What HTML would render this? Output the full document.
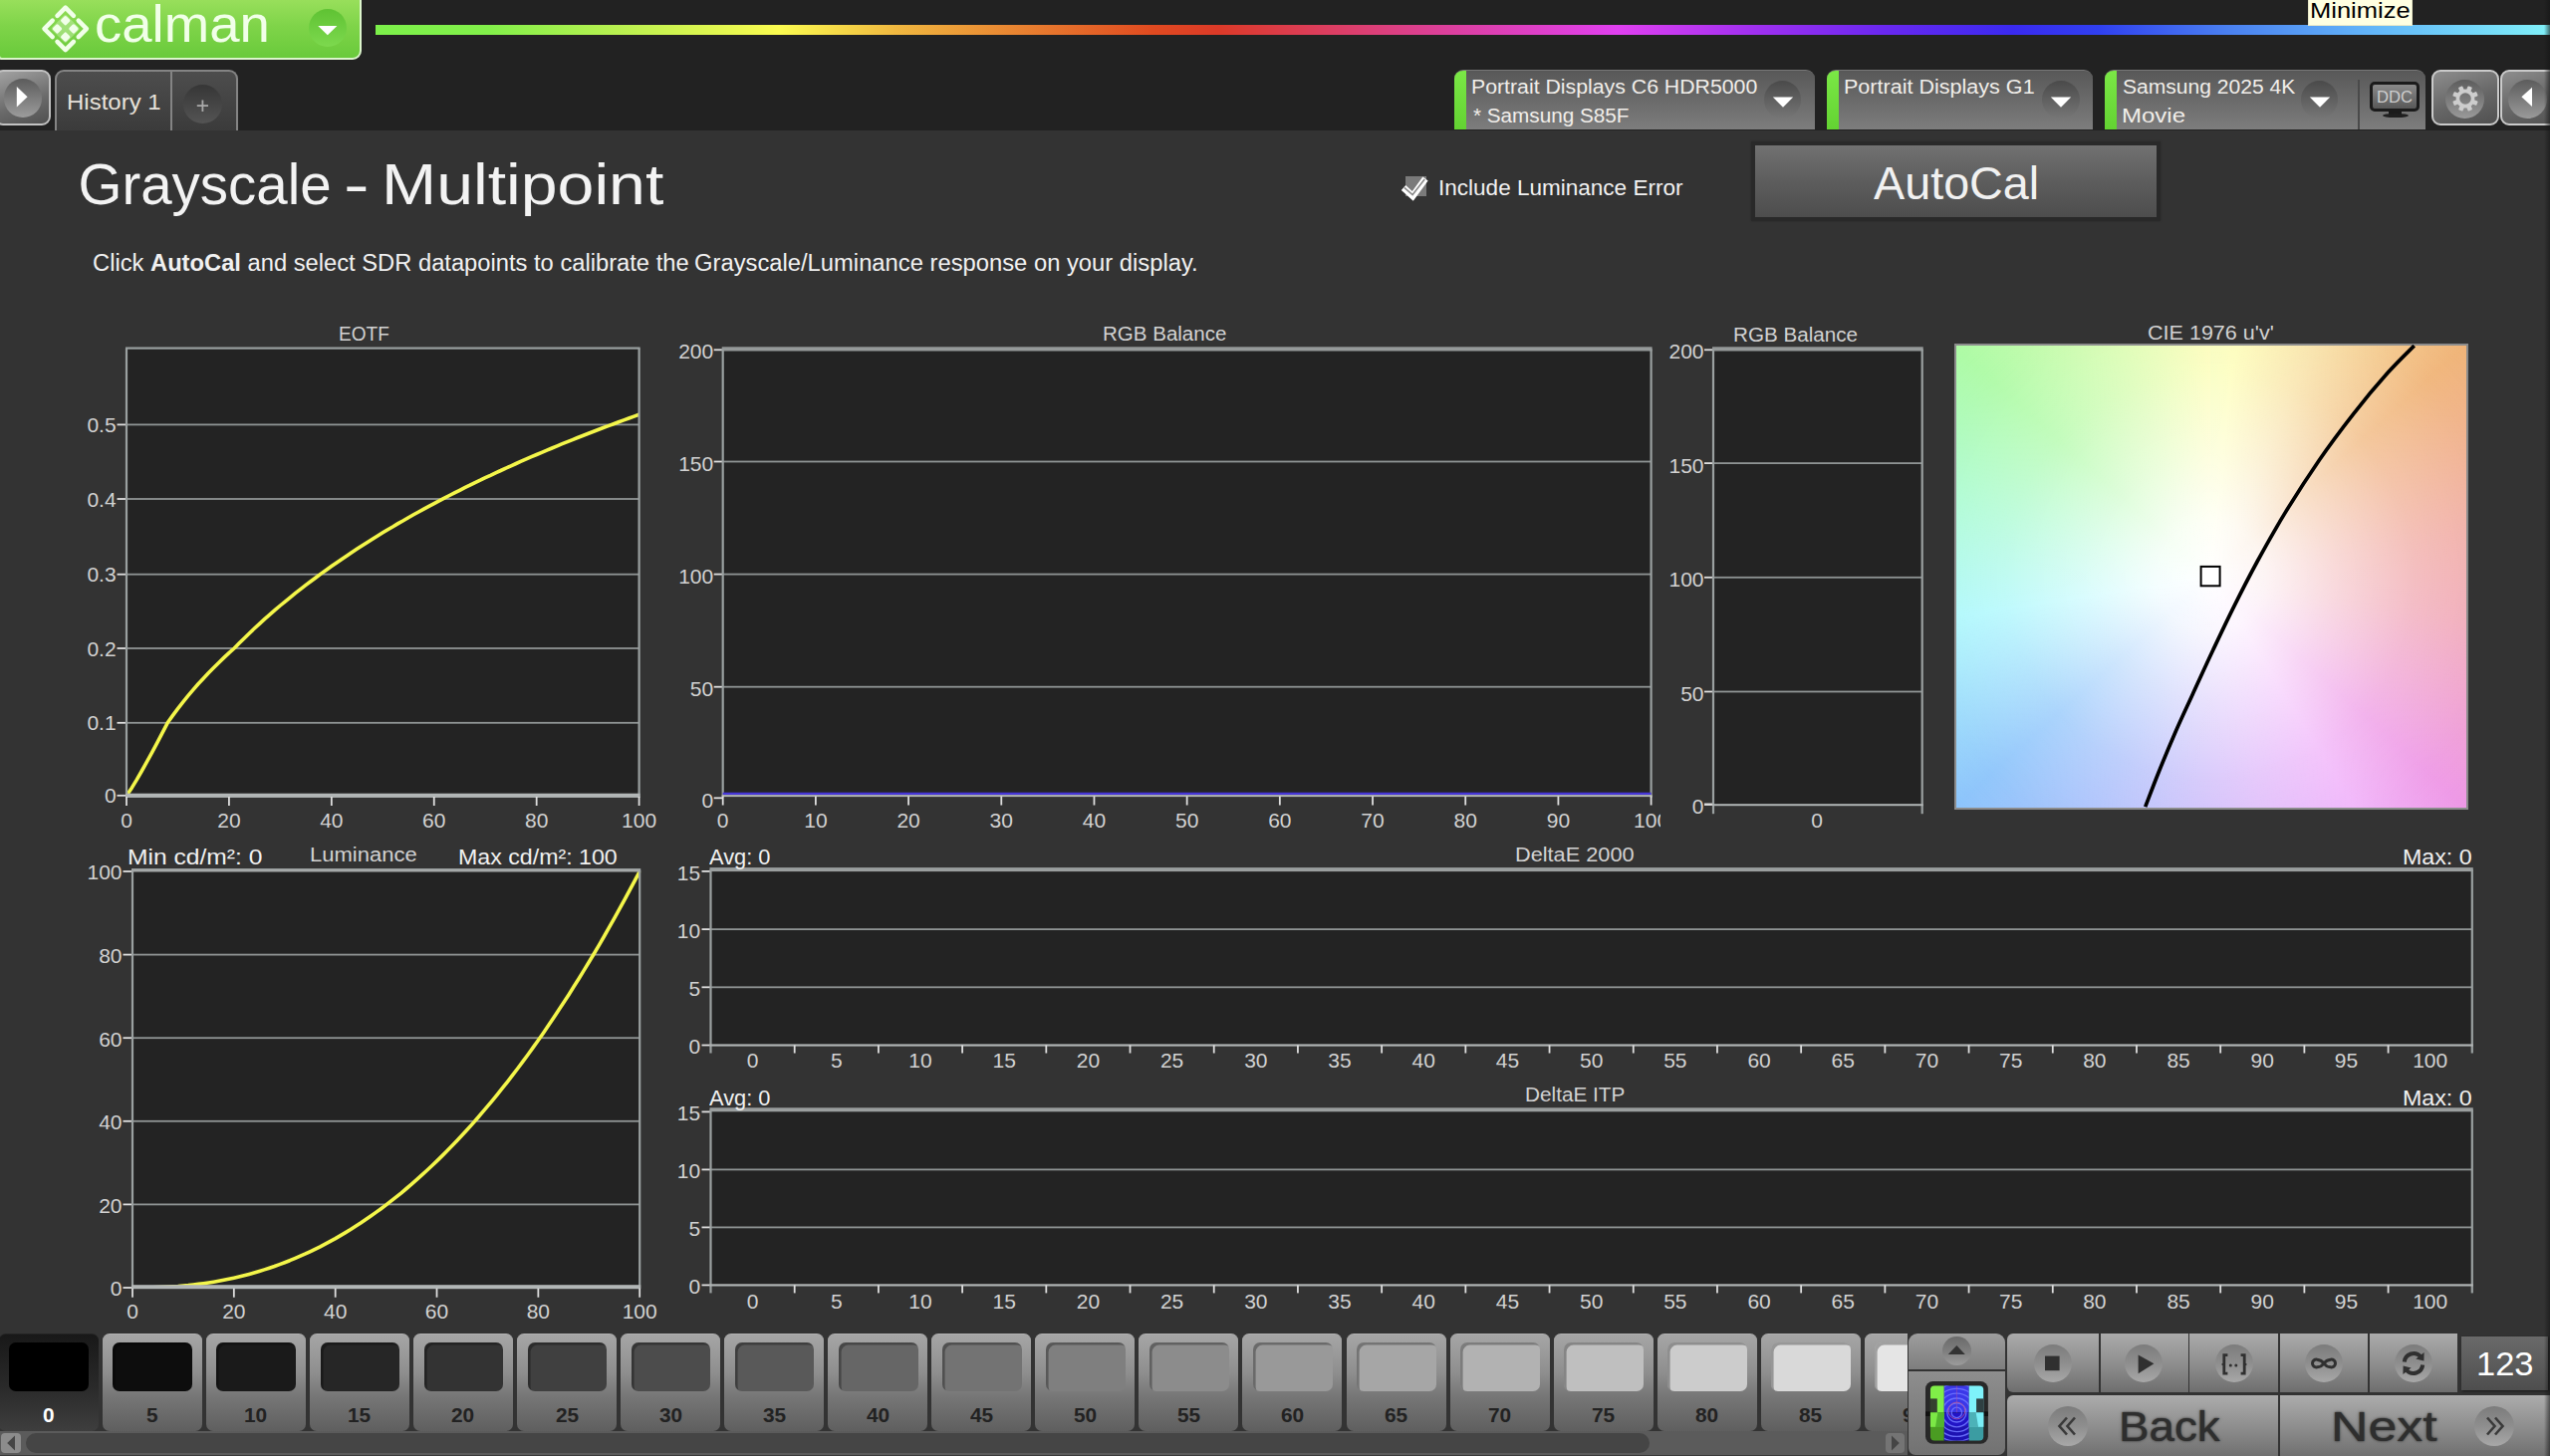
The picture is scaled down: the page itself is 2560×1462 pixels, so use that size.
<!DOCTYPE html><html><head><meta charset="utf-8"><title>Calman - Grayscale Multipoint</title><style>
html,body{margin:0;padding:0;background:#333;}
body{width:2560px;height:1462px;position:relative;overflow:hidden;font-family:"Liberation Sans",sans-serif;}
.t{position:absolute;white-space:pre;line-height:1;transform-origin:0 0;}
.a{position:absolute;box-sizing:border-box;}
.circ{position:absolute;border-radius:50%;}
.dd{position:absolute;top:70px;height:60px;box-sizing:border-box;border-radius:9px 9px 0 0;background:linear-gradient(#585858,#7d7d7d);border-top:1px solid #777;overflow:hidden;}
.dd i{position:absolute;left:0;top:-1px;bottom:0;width:12px;background:linear-gradient(#7be846,#63d332);}
.ddc{background:linear-gradient(#4a4a4a,#767676);}
.cell{position:absolute;top:0;width:100px;height:98px;border-radius:7px;background:linear-gradient(#a6a6a6,#8e8e8e 40%,#777 63%,#5f5f5f);box-sizing:border-box;border-top:1px solid #b0b0b0;}
.cell.sel{background:linear-gradient(#181818,#2a2a2a 55%,#3e3e3e);border-top:1px solid #222;}
.cell u{position:absolute;left:10.5px;top:8.8px;width:79.8px;height:48.2px;border-radius:7px;box-shadow:inset 2.6px 2.6px 0.6px rgba(0,0,0,.3);}
.tb{position:absolute;top:1338.8px;height:59.6px;background:linear-gradient(#ababab,#8c8c8c 55%,#6e6e6e);}
.ic{position:absolute;border-radius:50%;background:linear-gradient(#7c7c7c,#8e8e8e 50%,#a8a8a8);}
</style></head><body><svg class="a" style="left:0;top:0" width="2560" height="1462" viewBox="0 0 2560 1462"><rect x="127.0" y="349.6" width="514.6" height="448.4" fill="#232323"/><rect x="117.50" y="797.90" width="9.50" height="1.80" fill="#dedede"/><rect x="127.00" y="724.90" width="514.60" height="1.80" fill="#8f9494"/><rect x="117.50" y="724.90" width="9.50" height="1.80" fill="#dedede"/><rect x="127.00" y="650.10" width="514.60" height="1.80" fill="#8f9494"/><rect x="117.50" y="650.10" width="9.50" height="1.80" fill="#dedede"/><rect x="127.00" y="575.80" width="514.60" height="1.80" fill="#8f9494"/><rect x="117.50" y="575.80" width="9.50" height="1.80" fill="#dedede"/><rect x="127.00" y="500.10" width="514.60" height="1.80" fill="#8f9494"/><rect x="117.50" y="500.10" width="9.50" height="1.80" fill="#dedede"/><rect x="127.00" y="425.50" width="514.60" height="1.80" fill="#8f9494"/><rect x="117.50" y="425.50" width="9.50" height="1.80" fill="#dedede"/><clipPath id="ce"><rect x="127.0" y="345.6" width="515.6" height="452.4"/></clipPath><polyline clip-path="url(#ce)" points="127.0,798.8 132.1,791.4 137.3,782.9 142.4,774.0 147.6,764.7 152.7,755.3 157.9,745.6 163.0,735.8 168.2,725.8 173.3,718.6 178.5,711.7 183.6,705.1 188.8,698.7 193.9,692.7 199.0,686.8 204.2,681.2 209.3,675.7 214.5,670.5 219.6,665.4 224.8,660.4 229.9,655.6 235.1,651.0 240.2,645.8 245.4,640.7 250.5,635.7 255.7,630.8 260.8,626.1 265.9,621.4 271.1,616.9 276.2,612.4 281.4,608.0 286.5,603.8 291.7,599.6 296.8,595.4 302.0,591.4 307.1,587.4 312.3,583.5 317.4,579.7 322.5,575.9 327.7,572.2 332.8,568.5 338.0,564.9 343.1,561.4 348.3,557.9 353.4,554.4 358.6,551.0 363.7,547.7 368.9,544.4 374.0,541.2 379.2,538.0 384.3,534.8 389.4,531.7 394.6,528.7 399.7,525.6 404.9,522.7 410.0,519.7 415.2,516.8 420.3,514.0 425.5,511.1 430.6,508.4 435.8,505.6 440.9,502.9 446.1,500.2 451.2,497.5 456.3,494.9 461.5,492.3 466.6,489.7 471.8,487.2 476.9,484.6 482.1,482.2 487.2,479.7 492.4,477.3 497.5,474.8 502.7,472.5 507.8,470.1 513.0,467.8 518.1,465.5 523.2,463.2 528.4,460.9 533.5,458.7 538.7,456.5 543.8,454.3 549.0,452.1 554.1,450.0 559.3,447.8 564.4,445.7 569.6,443.6 574.7,441.6 579.8,439.5 585.0,437.5 590.1,435.5 595.3,433.5 600.4,431.5 605.6,429.5 610.7,427.6 615.9,425.7 621.0,423.8 626.2,421.9 631.3,420.0 636.5,418.1 641.6,416.3" fill="none" stroke="#f4f64a" stroke-width="3.6" stroke-linejoin="round"/><rect x="125.90" y="349.60" width="2.20" height="450.40" fill="#9aa0a0"/><rect x="640.50" y="349.60" width="2.20" height="450.40" fill="#9aa0a0"/><rect x="126.00" y="348.50" width="516.60" height="2.20" fill="#9aa0a0"/><rect x="126.00" y="796.70" width="516.60" height="4.20" fill="#b2b6b6"/><rect x="126.10" y="800.00" width="1.80" height="9.00" fill="#dedede"/><rect x="229.02" y="800.00" width="1.80" height="9.00" fill="#dedede"/><rect x="331.94" y="800.00" width="1.80" height="9.00" fill="#dedede"/><rect x="434.86" y="800.00" width="1.80" height="9.00" fill="#dedede"/><rect x="537.78" y="800.00" width="1.80" height="9.00" fill="#dedede"/><rect x="640.70" y="800.00" width="1.80" height="9.00" fill="#dedede"/><rect x="725.7" y="350.4" width="931.9" height="448.1" fill="#232323"/><rect x="716.70" y="350.40" width="9.00" height="1.80" fill="#dedede"/><rect x="725.70" y="462.60" width="931.90" height="1.80" fill="#8f9494"/><rect x="716.70" y="462.60" width="9.00" height="1.80" fill="#dedede"/><rect x="725.70" y="575.70" width="931.90" height="1.80" fill="#8f9494"/><rect x="716.70" y="575.70" width="9.00" height="1.80" fill="#dedede"/><rect x="725.70" y="688.80" width="931.90" height="1.80" fill="#8f9494"/><rect x="716.70" y="688.80" width="9.00" height="1.80" fill="#dedede"/><rect x="716.70" y="800.40" width="9.00" height="1.80" fill="#dedede"/><rect x="724.70" y="348.30" width="933.90" height="4.20" fill="#959999"/><rect x="724.60" y="350.40" width="2.20" height="450.10" fill="#9aa0a0"/><rect x="1656.50" y="350.40" width="2.20" height="450.10" fill="#9aa0a0"/><rect x="725.70" y="795.70" width="931.90" height="2.40" fill="#4636d6"/><rect x="724.70" y="798.10" width="933.90" height="2.00" fill="#b0b4b4"/><rect x="724.80" y="799.50" width="1.80" height="9.00" fill="#dedede"/><rect x="817.99" y="799.50" width="1.80" height="9.00" fill="#dedede"/><rect x="911.18" y="799.50" width="1.80" height="9.00" fill="#dedede"/><rect x="1004.37" y="799.50" width="1.80" height="9.00" fill="#dedede"/><rect x="1097.56" y="799.50" width="1.80" height="9.00" fill="#dedede"/><rect x="1190.75" y="799.50" width="1.80" height="9.00" fill="#dedede"/><rect x="1283.94" y="799.50" width="1.80" height="9.00" fill="#dedede"/><rect x="1377.13" y="799.50" width="1.80" height="9.00" fill="#dedede"/><rect x="1470.32" y="799.50" width="1.80" height="9.00" fill="#dedede"/><rect x="1563.51" y="799.50" width="1.80" height="9.00" fill="#dedede"/><rect x="1656.70" y="799.50" width="1.80" height="9.00" fill="#dedede"/><rect x="1720.0" y="350.4" width="209.7" height="457.8" fill="#232323"/><rect x="1711.00" y="350.40" width="9.00" height="1.80" fill="#dedede"/><rect x="1720.00" y="464.20" width="209.70" height="1.80" fill="#8f9494"/><rect x="1711.00" y="464.20" width="9.00" height="1.80" fill="#dedede"/><rect x="1720.00" y="578.90" width="209.70" height="1.80" fill="#8f9494"/><rect x="1711.00" y="578.90" width="9.00" height="1.80" fill="#dedede"/><rect x="1720.00" y="693.60" width="209.70" height="1.80" fill="#8f9494"/><rect x="1711.00" y="693.60" width="9.00" height="1.80" fill="#dedede"/><rect x="1711.00" y="806.50" width="9.00" height="2.40" fill="#dedede"/><rect x="1719.00" y="348.30" width="211.70" height="4.20" fill="#959999"/><rect x="1718.90" y="350.40" width="2.20" height="466.80" fill="#9aa0a0"/><rect x="1928.60" y="350.40" width="2.20" height="466.80" fill="#9aa0a0"/><rect x="1719.00" y="807.20" width="211.70" height="2.00" fill="#b0b4b4"/><rect x="133.0" y="873.8" width="509.2" height="417.9" fill="#232323"/><rect x="123.50" y="1292.10" width="9.50" height="1.80" fill="#dedede"/><rect x="133.00" y="1208.50" width="509.20" height="1.80" fill="#8f9494"/><rect x="123.50" y="1208.50" width="9.50" height="1.80" fill="#dedede"/><rect x="133.00" y="1124.90" width="509.20" height="1.80" fill="#8f9494"/><rect x="123.50" y="1124.90" width="9.50" height="1.80" fill="#dedede"/><rect x="133.00" y="1041.30" width="509.20" height="1.80" fill="#8f9494"/><rect x="123.50" y="1041.30" width="9.50" height="1.80" fill="#dedede"/><rect x="133.00" y="957.70" width="509.20" height="1.80" fill="#8f9494"/><rect x="123.50" y="957.70" width="9.50" height="1.80" fill="#dedede"/><rect x="123.50" y="874.10" width="9.50" height="1.80" fill="#dedede"/><clipPath id="cl"><rect x="133.0" y="869.8" width="510.2" height="421.9"/></clipPath><polyline clip-path="url(#cl)" points="133.0,1293.0 138.1,1293.0 143.2,1293.0 148.3,1292.9 153.4,1292.8 158.5,1292.6 163.6,1292.4 168.6,1292.1 173.7,1291.8 178.8,1291.5 183.9,1291.0 189.0,1290.6 194.1,1290.0 199.2,1289.4 204.3,1288.7 209.4,1288.0 214.5,1287.2 219.6,1286.3 224.7,1285.3 229.7,1284.3 234.8,1283.2 239.9,1282.0 245.0,1280.7 250.1,1279.4 255.2,1278.0 260.3,1276.5 265.4,1274.9 270.5,1273.2 275.6,1271.5 280.7,1269.6 285.8,1267.7 290.9,1265.7 295.9,1263.6 301.0,1261.4 306.1,1259.2 311.2,1256.8 316.3,1254.3 321.4,1251.8 326.5,1249.1 331.6,1246.4 336.7,1243.6 341.8,1240.6 346.9,1237.6 352.0,1234.5 357.0,1231.3 362.1,1228.0 367.2,1224.5 372.3,1221.0 377.4,1217.4 382.5,1213.7 387.6,1209.9 392.7,1205.9 397.8,1201.9 402.9,1197.8 408.0,1193.5 413.1,1189.2 418.2,1184.7 423.2,1180.2 428.3,1175.5 433.4,1170.7 438.5,1165.9 443.6,1160.9 448.7,1155.8 453.8,1150.6 458.9,1145.2 464.0,1139.8 469.1,1134.3 474.2,1128.6 479.3,1122.8 484.3,1116.9 489.4,1110.9 494.5,1104.8 499.6,1098.6 504.7,1092.2 509.8,1085.8 514.9,1079.2 520.0,1072.5 525.1,1065.6 530.2,1058.7 535.3,1051.6 540.4,1044.5 545.5,1037.2 550.5,1029.8 555.6,1022.2 560.7,1014.6 565.8,1006.8 570.9,998.9 576.0,990.8 581.1,982.7 586.2,974.4 591.3,966.0 596.4,957.5 601.5,948.8 606.6,940.0 611.6,931.1 616.7,922.1 621.8,912.9 626.9,903.6 632.0,894.2 637.1,884.7 642.2,875.0" fill="none" stroke="#f4f64a" stroke-width="3.6" stroke-linejoin="round"/><rect x="131.90" y="873.80" width="2.20" height="419.90" fill="#9aa0a0"/><rect x="641.10" y="873.80" width="2.20" height="419.90" fill="#9aa0a0"/><rect x="132.00" y="872.10" width="511.20" height="3.40" fill="#a4a8a8"/><rect x="132.00" y="1290.20" width="511.20" height="4.00" fill="#b2b6b6"/><rect x="132.10" y="1293.70" width="1.80" height="9.00" fill="#dedede"/><rect x="233.94" y="1293.70" width="1.80" height="9.00" fill="#dedede"/><rect x="335.78" y="1293.70" width="1.80" height="9.00" fill="#dedede"/><rect x="437.62" y="1293.70" width="1.80" height="9.00" fill="#dedede"/><rect x="539.46" y="1293.70" width="1.80" height="9.00" fill="#dedede"/><rect x="641.30" y="1293.70" width="1.80" height="9.00" fill="#dedede"/><rect x="713.5" y="873.1" width="1768.3" height="176.4" fill="#232323"/><rect x="704.50" y="1048.60" width="9.00" height="1.80" fill="#dedede"/><rect x="713.50" y="990.40" width="1768.30" height="1.80" fill="#8f9494"/><rect x="704.50" y="990.40" width="9.00" height="1.80" fill="#dedede"/><rect x="713.50" y="932.20" width="1768.30" height="1.80" fill="#8f9494"/><rect x="704.50" y="932.20" width="9.00" height="1.80" fill="#dedede"/><rect x="704.50" y="874.00" width="9.00" height="1.80" fill="#dedede"/><rect x="712.50" y="871.10" width="1770.30" height="4.00" fill="#9a9e9e"/><rect x="712.40" y="873.10" width="2.20" height="184.40" fill="#9aa0a0"/><rect x="2480.70" y="873.10" width="2.20" height="184.40" fill="#9aa0a0"/><rect x="712.50" y="1048.40" width="1770.30" height="2.20" fill="#b0b4b4"/><rect x="796.80" y="1049.50" width="1.80" height="8.00" fill="#dedede"/><rect x="881.01" y="1049.50" width="1.80" height="8.00" fill="#dedede"/><rect x="965.21" y="1049.50" width="1.80" height="8.00" fill="#dedede"/><rect x="1049.42" y="1049.50" width="1.80" height="8.00" fill="#dedede"/><rect x="1133.62" y="1049.50" width="1.80" height="8.00" fill="#dedede"/><rect x="1217.83" y="1049.50" width="1.80" height="8.00" fill="#dedede"/><rect x="1302.03" y="1049.50" width="1.80" height="8.00" fill="#dedede"/><rect x="1386.24" y="1049.50" width="1.80" height="8.00" fill="#dedede"/><rect x="1470.44" y="1049.50" width="1.80" height="8.00" fill="#dedede"/><rect x="1554.65" y="1049.50" width="1.80" height="8.00" fill="#dedede"/><rect x="1638.85" y="1049.50" width="1.80" height="8.00" fill="#dedede"/><rect x="1723.06" y="1049.50" width="1.80" height="8.00" fill="#dedede"/><rect x="1807.26" y="1049.50" width="1.80" height="8.00" fill="#dedede"/><rect x="1891.47" y="1049.50" width="1.80" height="8.00" fill="#dedede"/><rect x="1975.67" y="1049.50" width="1.80" height="8.00" fill="#dedede"/><rect x="2059.88" y="1049.50" width="1.80" height="8.00" fill="#dedede"/><rect x="2144.08" y="1049.50" width="1.80" height="8.00" fill="#dedede"/><rect x="2228.29" y="1049.50" width="1.80" height="8.00" fill="#dedede"/><rect x="2312.49" y="1049.50" width="1.80" height="8.00" fill="#dedede"/><rect x="2396.70" y="1049.50" width="1.80" height="8.00" fill="#dedede"/><rect x="713.5" y="1114.3" width="1768.3" height="176.1" fill="#232323"/><rect x="704.50" y="1289.50" width="9.00" height="1.80" fill="#dedede"/><rect x="713.50" y="1231.50" width="1768.30" height="1.80" fill="#8f9494"/><rect x="704.50" y="1231.50" width="9.00" height="1.80" fill="#dedede"/><rect x="713.50" y="1173.50" width="1768.30" height="1.80" fill="#8f9494"/><rect x="704.50" y="1173.50" width="9.00" height="1.80" fill="#dedede"/><rect x="704.50" y="1115.50" width="9.00" height="1.80" fill="#dedede"/><rect x="712.50" y="1112.30" width="1770.30" height="4.00" fill="#9a9e9e"/><rect x="712.40" y="1114.30" width="2.20" height="184.10" fill="#9aa0a0"/><rect x="2480.70" y="1114.30" width="2.20" height="184.10" fill="#9aa0a0"/><rect x="712.50" y="1289.30" width="1770.30" height="2.20" fill="#b0b4b4"/><rect x="796.80" y="1290.40" width="1.80" height="8.00" fill="#dedede"/><rect x="881.01" y="1290.40" width="1.80" height="8.00" fill="#dedede"/><rect x="965.21" y="1290.40" width="1.80" height="8.00" fill="#dedede"/><rect x="1049.42" y="1290.40" width="1.80" height="8.00" fill="#dedede"/><rect x="1133.62" y="1290.40" width="1.80" height="8.00" fill="#dedede"/><rect x="1217.83" y="1290.40" width="1.80" height="8.00" fill="#dedede"/><rect x="1302.03" y="1290.40" width="1.80" height="8.00" fill="#dedede"/><rect x="1386.24" y="1290.40" width="1.80" height="8.00" fill="#dedede"/><rect x="1470.44" y="1290.40" width="1.80" height="8.00" fill="#dedede"/><rect x="1554.65" y="1290.40" width="1.80" height="8.00" fill="#dedede"/><rect x="1638.85" y="1290.40" width="1.80" height="8.00" fill="#dedede"/><rect x="1723.06" y="1290.40" width="1.80" height="8.00" fill="#dedede"/><rect x="1807.26" y="1290.40" width="1.80" height="8.00" fill="#dedede"/><rect x="1891.47" y="1290.40" width="1.80" height="8.00" fill="#dedede"/><rect x="1975.67" y="1290.40" width="1.80" height="8.00" fill="#dedede"/><rect x="2059.88" y="1290.40" width="1.80" height="8.00" fill="#dedede"/><rect x="2144.08" y="1290.40" width="1.80" height="8.00" fill="#dedede"/><rect x="2228.29" y="1290.40" width="1.80" height="8.00" fill="#dedede"/><rect x="2312.49" y="1290.40" width="1.80" height="8.00" fill="#dedede"/><rect x="2396.70" y="1290.40" width="1.80" height="8.00" fill="#dedede"/></svg><div class="a" id="topbar" style="left:0;top:0;width:2560px;height:131px;background:#222"></div><div class="a" id="logo" style="left:-2px;top:-2px;width:365px;height:62px;border-radius:0 0 9px 4px;background:linear-gradient(#98df5b,#7fd449 45%,#69ca3b);border:2px solid #dcf5cc;"></div><svg class="a" style="left:0;top:0" width="120" height="60" viewBox="0 0 120 60"><g transform="translate(65.7,28.9) rotate(45)" fill="#f1ffe9" stroke="none"><rect x="-10.5" y="-10.5" width="21" height="21" rx="2" fill="#f1ffe9" opacity=".3"/><rect x="-9.55" y="-9.55" width="7.50" height="7.50" rx="1.6"/><rect x="-9.55" y="2.05" width="7.50" height="7.50" rx="1.6"/><rect x="2.05" y="-9.55" width="7.50" height="7.50" rx="1.6"/><rect x="2.05" y="2.05" width="7.50" height="7.50" rx="1.6"/></g><g transform="translate(65.7,28.9) rotate(45)" fill="none" stroke="#f1ffe9" stroke-width="4.5" stroke-linejoin="round" stroke-linecap="round"><path d="M-15.0 -3.4 L-15.0 -15.0 L-3.4 -15.0"/><path d="M15.0 -3.4 L15.0 -15.0 L3.4 -15.0"/><path d="M15.0 3.4 L15.0 15.0 L3.4 15.0"/><path d="M-15.0 3.4 L-15.0 15.0 L-3.4 15.0"/></g></svg><span class="t" style="left:94.68px;top:-1.08px;font-size:51.60px;color:#f1ffe9;transform:scaleX(1.0572);">calman</span><div class="circ" style="left:309.5px;top:9.2px;width:38px;height:38px;background:linear-gradient(#5fc233,#7dd94e)"></div><svg class="a" style="left:315px;top:22px" width="30" height="18"><path d="M4.3 4.1 L23.4 4.1 L13.85 13.3 Z" fill="#fff"/></svg><div class="a" id="rainbow" style="left:377px;top:25px;width:2183px;height:10px;background:linear-gradient(90deg,#7cf04a 0.00%,#82f04a 5.18%,#b8f050 11.09%,#fbfb50 18.60%,#f0b840 23.91%,#e88030 29.87%,#e04a20 35.78%,#dc3a28 38.75%,#dc4080 46.63%,#dc40a0 49.61%,#e040f0 57.12%,#a030f0 63.44%,#6a28f0 69.35%,#3a2af0 75.31%,#3040f0 79.25%,#4a80f0 85.16%,#60b0f8 91.11%,#80f0f8 100.00%)"></div><div class="a" id="tooltip" style="left:2317px;top:-1px;width:104.5px;height:27px;background:#ffffe1;border:1px solid #e8e8c8"></div><span class="t" style="left:2318.81px;top:0.27px;font-size:22.60px;color:#000;transform:scaleX(1.1287);">Minimize</span><div class="a" style="left:-6px;top:70px;width:57px;height:56px;border:2px solid #c2c2c2;border-radius:9px;background:linear-gradient(160deg,#a4a4a4,#6a6a6a 60%,#505050)"></div><div class="circ" style="left:3.5px;top:78.8px;width:38.8px;height:38.8px;background:linear-gradient(#5c5c5c,#9c9c9c)"></div><svg class="a" style="left:0;top:70px" width="50" height="56"><path d="M16.8 17 L27.6 27.3 L16.8 37.4 Z" fill="#fff"/></svg><div class="a" style="left:55px;top:70px;width:184px;height:60.5px;border:2px solid #848484;border-bottom:none;border-radius:9px 9px 0 0;background:linear-gradient(#4d4d4d,#3b3b3b)"></div><div class="a" style="left:171px;top:71px;width:2px;height:59.5px;background:#848484"></div><span class="t" style="left:66.53px;top:92.38px;font-size:22.00px;color:#e6e1da;transform:scaleX(1.0903);">History 1</span><div class="circ" style="left:183.9px;top:84.9px;width:39px;height:39px;background:linear-gradient(#363636,#545454)"></div><svg class="a" style="left:190px;top:95px" width="28" height="24"><path d="M7.8 11.2 H19 M13.4 5.4 V17" stroke="#aaa" stroke-width="1.8" fill="none"/></svg><div class="dd" style="left:1460.0px;width:362.0px"><i></i></div><div class="circ ddc" style="left:1770.8px;top:81.2px;width:37.6px;height:37.6px"></div><svg class="a" style="left:1774.6px;top:92px" width="30" height="20"><path d="M4.8 5.6 L25.2 5.6 L15 15.8 Z" fill="#fff"/></svg><span class="t" style="left:1477.16px;top:77.27px;font-size:20.00px;color:#f1eeea;transform:scaleX(1.0636);">Portrait Displays C6 HDR5000</span><span class="t" style="left:1478.57px;top:105.77px;font-size:20.00px;color:#f1eeea;transform:scaleX(1.0349);">* Samsung S85F</span><div class="dd" style="left:1834.0px;width:267.0px"><i></i></div><div class="circ ddc" style="left:2050.2px;top:81.2px;width:37.6px;height:37.6px"></div><svg class="a" style="left:2054.0px;top:92px" width="30" height="20"><path d="M4.8 5.6 L25.2 5.6 L15 15.8 Z" fill="#fff"/></svg><span class="t" style="left:1851.13px;top:77.27px;font-size:20.00px;color:#f1eeea;transform:scaleX(1.0775);">Portrait Displays G1</span><div class="dd" style="left:2113.3px;width:321.5px"><i></i><b style="position:absolute;left:253.6px;top:9px;bottom:0;width:2px;background:#4a4a4a"></b></div><div class="circ ddc" style="left:2309.7px;top:81.2px;width:37.6px;height:37.6px"></div><svg class="a" style="left:2313.5px;top:92px" width="30" height="20"><path d="M4.8 5.6 L25.2 5.6 L15 15.8 Z" fill="#fff"/></svg><span class="t" style="left:2131.24px;top:77.27px;font-size:20.00px;color:#f1eeea;transform:scaleX(1.0524);">Samsung 2025 4K</span><span class="t" style="left:2130.23px;top:105.77px;font-size:20.00px;color:#f1eeea;transform:scaleX(1.2003);">Movie</span><div class="a" style="left:2379.3px;top:81.6px;width:49.7px;height:30.6px;border:3px solid #1b1b1b;border-radius:5px;background:linear-gradient(#8a8a8a,#585858)"></div><div class="a" style="left:2398px;top:112px;width:13px;height:4px;background:#1b1b1b"></div><div class="a" style="left:2391.5px;top:113.8px;width:26px;height:4.6px;border-radius:50%;background:#1f1f1f"></div><span class="t" style="left:2385.64px;top:89.20px;font-size:16.30px;color:#cdcdcd;transform:scaleX(1.0193);">DDC</span><div class="a" style="left:2441px;top:70px;width:67.5px;height:56px;border:2px solid #cacaca;border-radius:9px;background:linear-gradient(160deg,#8e8e8e,#666 55%,#505050)"></div><div class="circ" style="left:2455.4px;top:79.9px;width:39px;height:39px;background:linear-gradient(#5c5c5c,#9a9a9a)"></div><svg class="a" style="left:2454.9px;top:79.4px" width="40" height="40" viewBox="-20 -20 40 40"><g fill="#cdcdcd"><rect x="-2.3" y="-12.9" width="4.6" height="5" rx="0.8" transform="rotate(22)"/><rect x="-2.3" y="-12.9" width="4.6" height="5" rx="0.8" transform="rotate(67)"/><rect x="-2.3" y="-12.9" width="4.6" height="5" rx="0.8" transform="rotate(112)"/><rect x="-2.3" y="-12.9" width="4.6" height="5" rx="0.8" transform="rotate(157)"/><rect x="-2.3" y="-12.9" width="4.6" height="5" rx="0.8" transform="rotate(202)"/><rect x="-2.3" y="-12.9" width="4.6" height="5" rx="0.8" transform="rotate(247)"/><rect x="-2.3" y="-12.9" width="4.6" height="5" rx="0.8" transform="rotate(292)"/><rect x="-2.3" y="-12.9" width="4.6" height="5" rx="0.8" transform="rotate(337)"/></g><circle r="7.6" fill="none" stroke="#cdcdcd" stroke-width="3.6"/></svg><div class="a" style="left:2509.5px;top:70px;width:70px;height:56px;border:2px solid #cacaca;border-radius:9px;background:linear-gradient(160deg,#8e8e8e,#666 55%,#505050)"></div><div class="circ" style="left:2518.1px;top:79.9px;width:39px;height:39px;background:linear-gradient(#5c5c5c,#9a9a9a)"></div><svg class="a" style="left:2520px;top:80px" width="30" height="36"><path d="M22 7.7 L22 27 L11.4 17.3 Z" fill="#fff"/></svg><span class="t" style="left:78.45px;top:157.97px;font-size:56.50px;color:#f3f3f3;">Grayscale</span><span class="t" style="left:345.28px;top:157.97px;font-size:56.50px;color:#f3f3f3;transform:scaleX(1.3629);">-</span><span class="t" style="left:383.37px;top:157.97px;font-size:56.50px;color:#f3f3f3;transform:scaleX(1.1716);">Multipoint</span><span class="t" style="left:92.70px;top:252.53px;font-size:23.00px;color:#f1f1f1;transform:scaleX(1.0314);">Click <b>AutoCal</b> and select SDR datapoints to calibrate the</span><span class="t" style="left:697.20px;top:252.53px;font-size:23.00px;color:#f1f1f1;transform:scaleX(1.0336);">Grayscale/Luminance response on your display.</span><div class="a" style="left:1411.2px;top:176.9px;width:20.8px;height:20.4px;background:#7a7a7a"></div><svg class="a" style="left:1400px;top:168px" width="40" height="36"><path d="M9 20.5 L18.3 29 L31 11.5" fill="none" stroke="#fff" stroke-width="6.5" stroke-linejoin="miter"/><path d="M9.8 20.3 L18.1 27.6 L30.2 11.9" fill="none" stroke="#8a8a8a" stroke-width="1.6"/></svg><span class="t" style="left:1444.42px;top:177.52px;font-size:21.60px;color:#f1f1f1;transform:scaleX(1.0435);">Include Luminance Error</span><div class="a" id="autocal" style="left:1757.8px;top:142.4px;width:411.6px;height:79.8px;border:4px solid #292929;background:linear-gradient(#717171,#5d5d5d 50%,#4d4d4d);box-shadow:0 0 1.5px #292929"></div><span class="t" style="left:1881.31px;top:161.44px;font-size:46.50px;color:#f1f1f1;transform:scaleX(1.0048);">AutoCal</span><span class="t" style="left:104.92px;top:788.42px;font-size:21.00px;color:#d2d2d2;">0</span><span class="t" style="left:87.41px;top:715.42px;font-size:21.00px;color:#d2d2d2;">0.1</span><span class="t" style="left:87.41px;top:640.62px;font-size:21.00px;color:#d2d2d2;">0.2</span><span class="t" style="left:87.41px;top:566.32px;font-size:21.00px;color:#d2d2d2;">0.3</span><span class="t" style="left:87.41px;top:490.62px;font-size:21.00px;color:#d2d2d2;">0.4</span><span class="t" style="left:87.41px;top:416.02px;font-size:21.00px;color:#d2d2d2;">0.5</span><span class="t" style="left:121.16px;top:812.52px;font-size:21.00px;color:#d2d2d2;">0</span><span class="t" style="left:218.24px;top:812.52px;font-size:21.00px;color:#d2d2d2;">20</span><span class="t" style="left:321.16px;top:812.52px;font-size:21.00px;color:#d2d2d2;">40</span><span class="t" style="left:424.08px;top:812.52px;font-size:21.00px;color:#d2d2d2;">60</span><span class="t" style="left:527.00px;top:812.52px;font-size:21.00px;color:#d2d2d2;">80</span><span class="t" style="left:624.08px;top:812.52px;font-size:21.00px;color:#d2d2d2;">100</span><span class="t" style="left:339.94px;top:325.37px;font-size:20.00px;color:#d2d2d2;transform:scaleX(0.9531);">EOTF</span><span class="t" style="left:681.16px;top:342.02px;font-size:21.00px;color:#d2d2d2;">200</span><span class="t" style="left:681.16px;top:455.12px;font-size:21.00px;color:#d2d2d2;">150</span><span class="t" style="left:681.16px;top:568.22px;font-size:21.00px;color:#d2d2d2;">100</span><span class="t" style="left:692.84px;top:681.32px;font-size:21.00px;color:#d2d2d2;">50</span><span class="t" style="left:704.52px;top:792.92px;font-size:21.00px;color:#d2d2d2;">0</span><span class="t" style="left:719.86px;top:812.72px;font-size:21.00px;color:#d2d2d2;">0</span><span class="t" style="left:807.21px;top:812.72px;font-size:21.00px;color:#d2d2d2;">10</span><span class="t" style="left:900.40px;top:812.72px;font-size:21.00px;color:#d2d2d2;">20</span><span class="t" style="left:993.59px;top:812.72px;font-size:21.00px;color:#d2d2d2;">30</span><span class="t" style="left:1086.78px;top:812.72px;font-size:21.00px;color:#d2d2d2;">40</span><span class="t" style="left:1179.97px;top:812.72px;font-size:21.00px;color:#d2d2d2;">50</span><span class="t" style="left:1273.16px;top:812.72px;font-size:21.00px;color:#d2d2d2;">60</span><span class="t" style="left:1366.35px;top:812.72px;font-size:21.00px;color:#d2d2d2;">70</span><span class="t" style="left:1459.54px;top:812.72px;font-size:21.00px;color:#d2d2d2;">80</span><span class="t" style="left:1552.73px;top:812.72px;font-size:21.00px;color:#d2d2d2;">90</span><div class="a" style="left:1630px;top:805px;width:36.5px;height:34px;overflow:hidden"><span class="t" style="left:10.08px;top:7.72px;font-size:21.00px;color:#d2d2d2;">100</span></div><span class="t" style="left:1106.82px;top:325.47px;font-size:20.00px;color:#d2d2d2;transform:scaleX(1.0266);">RGB Balance</span><span class="t" style="left:1675.46px;top:342.02px;font-size:21.00px;color:#d2d2d2;">200</span><span class="t" style="left:1675.46px;top:456.72px;font-size:21.00px;color:#d2d2d2;">150</span><span class="t" style="left:1675.46px;top:571.42px;font-size:21.00px;color:#d2d2d2;">100</span><span class="t" style="left:1687.14px;top:686.12px;font-size:21.00px;color:#d2d2d2;">50</span><span class="t" style="left:1698.82px;top:799.32px;font-size:21.00px;color:#d2d2d2;">0</span><span class="t" style="left:1818.16px;top:812.62px;font-size:21.00px;color:#d2d2d2;">0</span><span class="t" style="left:1739.51px;top:325.97px;font-size:20.00px;color:#d2d2d2;transform:scaleX(1.0317);">RGB Balance</span><div class="a" id="cie" style="left:1961.7px;top:345.1px;width:516.6px;height:467.5px;border:2px solid #8c8c8c;background:radial-gradient(circle at 49.8% 50%,#fff 0,rgba(255,255,255,.88) 55px,rgba(255,255,255,.58) 125px,rgba(255,255,255,.27) 205px,rgba(255,255,255,.06) 295px,rgba(255,255,255,0) 345px),conic-gradient(from 0deg at 49.8% 50%,#f6fdb2 0deg,#fdfdb0 6deg,#f8e0a0 24deg,#f0b478 47.8deg,#f0a8a0 80deg,#f0a4b4 100deg,#ee98e6 132deg,#f0b0fa 148deg,#dcb6fa 168deg,#c8b8fa 183deg,#a8bcfb 205deg,#8cc4fb 228deg,#a0e8fc 250deg,#a8f8fc 261deg,#a8fbd0 287deg,#adfba5 312deg,#d6fcaa 338deg,#fdfdb0 360deg)"></div><span class="t" style="left:2156.31px;top:324.07px;font-size:20.00px;color:#d2d2d2;transform:scaleX(1.0771);">CIE 1976 u'v'</span><span class="t" style="left:110.82px;top:1283.42px;font-size:21.00px;color:#d2d2d2;">0</span><span class="t" style="left:99.14px;top:1199.82px;font-size:21.00px;color:#d2d2d2;">20</span><span class="t" style="left:99.14px;top:1116.22px;font-size:21.00px;color:#d2d2d2;">40</span><span class="t" style="left:99.14px;top:1032.62px;font-size:21.00px;color:#d2d2d2;">60</span><span class="t" style="left:99.14px;top:949.02px;font-size:21.00px;color:#d2d2d2;">80</span><span class="t" style="left:87.46px;top:865.42px;font-size:21.00px;color:#d2d2d2;">100</span><span class="t" style="left:127.16px;top:1306.12px;font-size:21.00px;color:#d2d2d2;">0</span><span class="t" style="left:223.16px;top:1306.12px;font-size:21.00px;color:#d2d2d2;">20</span><span class="t" style="left:325.00px;top:1306.12px;font-size:21.00px;color:#d2d2d2;">40</span><span class="t" style="left:426.84px;top:1306.12px;font-size:21.00px;color:#d2d2d2;">60</span><span class="t" style="left:528.68px;top:1306.12px;font-size:21.00px;color:#d2d2d2;">80</span><span class="t" style="left:624.68px;top:1306.12px;font-size:21.00px;color:#d2d2d2;">100</span><span class="t" style="left:311.19px;top:848.07px;font-size:20.00px;color:#d2d2d2;transform:scaleX(1.1016);">Luminance</span><span class="t" style="left:127.98px;top:851.48px;font-size:21.40px;color:#f1f1f1;transform:scaleX(1.1509);">Min cd/m²: 0</span><span class="t" style="left:460.10px;top:851.48px;font-size:21.40px;color:#f1f1f1;transform:scaleX(1.0837);">Max cd/m²: 100</span><span class="t" style="left:691.52px;top:1040.22px;font-size:21.00px;color:#d2d2d2;">0</span><span class="t" style="left:691.52px;top:982.02px;font-size:21.00px;color:#d2d2d2;">5</span><span class="t" style="left:679.84px;top:923.82px;font-size:21.00px;color:#d2d2d2;">10</span><span class="t" style="left:679.84px;top:865.62px;font-size:21.00px;color:#d2d2d2;">15</span><span class="t" style="left:749.76px;top:1054.32px;font-size:21.00px;color:#d2d2d2;">0</span><span class="t" style="left:833.97px;top:1054.32px;font-size:21.00px;color:#d2d2d2;">5</span><span class="t" style="left:912.33px;top:1054.32px;font-size:21.00px;color:#d2d2d2;">10</span><span class="t" style="left:996.54px;top:1054.32px;font-size:21.00px;color:#d2d2d2;">15</span><span class="t" style="left:1080.74px;top:1054.32px;font-size:21.00px;color:#d2d2d2;">20</span><span class="t" style="left:1164.95px;top:1054.32px;font-size:21.00px;color:#d2d2d2;">25</span><span class="t" style="left:1249.15px;top:1054.32px;font-size:21.00px;color:#d2d2d2;">30</span><span class="t" style="left:1333.36px;top:1054.32px;font-size:21.00px;color:#d2d2d2;">35</span><span class="t" style="left:1417.56px;top:1054.32px;font-size:21.00px;color:#d2d2d2;">40</span><span class="t" style="left:1501.77px;top:1054.32px;font-size:21.00px;color:#d2d2d2;">45</span><span class="t" style="left:1585.97px;top:1054.32px;font-size:21.00px;color:#d2d2d2;">50</span><span class="t" style="left:1670.18px;top:1054.32px;font-size:21.00px;color:#d2d2d2;">55</span><span class="t" style="left:1754.38px;top:1054.32px;font-size:21.00px;color:#d2d2d2;">60</span><span class="t" style="left:1838.59px;top:1054.32px;font-size:21.00px;color:#d2d2d2;">65</span><span class="t" style="left:1922.79px;top:1054.32px;font-size:21.00px;color:#d2d2d2;">70</span><span class="t" style="left:2006.99px;top:1054.32px;font-size:21.00px;color:#d2d2d2;">75</span><span class="t" style="left:2091.20px;top:1054.32px;font-size:21.00px;color:#d2d2d2;">80</span><span class="t" style="left:2175.40px;top:1054.32px;font-size:21.00px;color:#d2d2d2;">85</span><span class="t" style="left:2259.61px;top:1054.32px;font-size:21.00px;color:#d2d2d2;">90</span><span class="t" style="left:2343.81px;top:1054.32px;font-size:21.00px;color:#d2d2d2;">95</span><span class="t" style="left:2422.18px;top:1054.32px;font-size:21.00px;color:#d2d2d2;">100</span><span class="t" style="left:1521.42px;top:847.67px;font-size:20.00px;color:#d2d2d2;transform:scaleX(1.0859);">DeltaE 2000</span><span class="t" style="left:712.46px;top:851.28px;font-size:21.40px;color:#f1f1f1;transform:scaleX(1.0201);">Avg: 0</span><span class="t" style="left:2411.99px;top:851.28px;font-size:21.40px;color:#f1f1f1;transform:scaleX(1.0855);">Max: 0</span><span class="t" style="left:691.52px;top:1281.12px;font-size:21.00px;color:#d2d2d2;">0</span><span class="t" style="left:691.52px;top:1223.12px;font-size:21.00px;color:#d2d2d2;">5</span><span class="t" style="left:679.84px;top:1165.12px;font-size:21.00px;color:#d2d2d2;">10</span><span class="t" style="left:679.84px;top:1107.12px;font-size:21.00px;color:#d2d2d2;">15</span><span class="t" style="left:749.76px;top:1295.62px;font-size:21.00px;color:#d2d2d2;">0</span><span class="t" style="left:833.97px;top:1295.62px;font-size:21.00px;color:#d2d2d2;">5</span><span class="t" style="left:912.33px;top:1295.62px;font-size:21.00px;color:#d2d2d2;">10</span><span class="t" style="left:996.54px;top:1295.62px;font-size:21.00px;color:#d2d2d2;">15</span><span class="t" style="left:1080.74px;top:1295.62px;font-size:21.00px;color:#d2d2d2;">20</span><span class="t" style="left:1164.95px;top:1295.62px;font-size:21.00px;color:#d2d2d2;">25</span><span class="t" style="left:1249.15px;top:1295.62px;font-size:21.00px;color:#d2d2d2;">30</span><span class="t" style="left:1333.36px;top:1295.62px;font-size:21.00px;color:#d2d2d2;">35</span><span class="t" style="left:1417.56px;top:1295.62px;font-size:21.00px;color:#d2d2d2;">40</span><span class="t" style="left:1501.77px;top:1295.62px;font-size:21.00px;color:#d2d2d2;">45</span><span class="t" style="left:1585.97px;top:1295.62px;font-size:21.00px;color:#d2d2d2;">50</span><span class="t" style="left:1670.18px;top:1295.62px;font-size:21.00px;color:#d2d2d2;">55</span><span class="t" style="left:1754.38px;top:1295.62px;font-size:21.00px;color:#d2d2d2;">60</span><span class="t" style="left:1838.59px;top:1295.62px;font-size:21.00px;color:#d2d2d2;">65</span><span class="t" style="left:1922.79px;top:1295.62px;font-size:21.00px;color:#d2d2d2;">70</span><span class="t" style="left:2006.99px;top:1295.62px;font-size:21.00px;color:#d2d2d2;">75</span><span class="t" style="left:2091.20px;top:1295.62px;font-size:21.00px;color:#d2d2d2;">80</span><span class="t" style="left:2175.40px;top:1295.62px;font-size:21.00px;color:#d2d2d2;">85</span><span class="t" style="left:2259.61px;top:1295.62px;font-size:21.00px;color:#d2d2d2;">90</span><span class="t" style="left:2343.81px;top:1295.62px;font-size:21.00px;color:#d2d2d2;">95</span><span class="t" style="left:2422.18px;top:1295.62px;font-size:21.00px;color:#d2d2d2;">100</span><span class="t" style="left:1531.20px;top:1089.17px;font-size:20.00px;color:#d2d2d2;transform:scaleX(1.0372);">DeltaE ITP</span><span class="t" style="left:712.46px;top:1092.68px;font-size:21.40px;color:#f1f1f1;transform:scaleX(1.0201);">Avg: 0</span><span class="t" style="left:2411.99px;top:1092.68px;font-size:21.40px;color:#f1f1f1;transform:scaleX(1.0855);">Max: 0</span><svg class="a" style="left:1962.7px;top:346.1px" width="514.6" height="465.5" viewBox="1962.7 346.1 514.6 465.5"><path d="M2423.4 347.2 C2418.9 351.8 2406.8 363.2 2396.6 374.7 C2386.4 386.1 2373.6 401.3 2362.2 415.9 C2350.8 430.5 2339.3 445.7 2327.9 462.3 C2316.5 478.9 2303.8 498.6 2293.5 515.5 C2283.2 532.4 2274.6 547.9 2266.0 563.6 C2257.4 579.4 2249.4 595.1 2242.0 610.0 C2234.6 624.9 2228.3 638.3 2221.4 652.9 C2214.5 667.5 2207.1 683.9 2200.8 697.6 C2194.5 711.4 2189.3 722.2 2183.6 735.4 C2177.9 748.6 2171.4 764.1 2166.4 776.6 C2161.4 789.1 2155.6 804.6 2153.4 810.2" fill="none" stroke="#000" stroke-width="3.7"/><rect x="2209.3" y="569" width="19" height="19.4" fill="#fff" stroke="#000" stroke-width="2"/></svg><div class="a" id="strip" style="left:0;top:1338.7px;width:1915px;height:124px;overflow:hidden"><div class="cell sel" style="left:-1.20px"><u style="background:#000000"></u><span class="t" style="left:44.22px;top:70.97px;font-size:20.00px;color:#fff;font-weight:bold;transform:scaleX(1.0400);">0</span></div><div class="cell" style="left:102.90px"><u style="background:#0d0d0d"></u><span class="t" style="left:44.22px;top:70.97px;font-size:20.00px;color:#222;font-weight:bold;transform:scaleX(1.0400);">5</span></div><div class="cell" style="left:206.95px"><u style="background:#1a1a1a"></u><span class="t" style="left:38.43px;top:70.97px;font-size:20.00px;color:#222;font-weight:bold;transform:scaleX(1.0400);">10</span></div><div class="cell" style="left:311.00px"><u style="background:#262626"></u><span class="t" style="left:38.43px;top:70.97px;font-size:20.00px;color:#222;font-weight:bold;transform:scaleX(1.0400);">15</span></div><div class="cell" style="left:415.05px"><u style="background:#333333"></u><span class="t" style="left:38.43px;top:70.97px;font-size:20.00px;color:#222;font-weight:bold;transform:scaleX(1.0400);">20</span></div><div class="cell" style="left:519.10px"><u style="background:#404040"></u><span class="t" style="left:38.43px;top:70.97px;font-size:20.00px;color:#222;font-weight:bold;transform:scaleX(1.0400);">25</span></div><div class="cell" style="left:623.15px"><u style="background:#4c4c4c"></u><span class="t" style="left:38.43px;top:70.97px;font-size:20.00px;color:#222;font-weight:bold;transform:scaleX(1.0400);">30</span></div><div class="cell" style="left:727.20px"><u style="background:#595959"></u><span class="t" style="left:38.43px;top:70.97px;font-size:20.00px;color:#222;font-weight:bold;transform:scaleX(1.0400);">35</span></div><div class="cell" style="left:831.25px"><u style="background:#666666"></u><span class="t" style="left:38.43px;top:70.97px;font-size:20.00px;color:#222;font-weight:bold;transform:scaleX(1.0400);">40</span></div><div class="cell" style="left:935.30px"><u style="background:#737373"></u><span class="t" style="left:38.43px;top:70.97px;font-size:20.00px;color:#222;font-weight:bold;transform:scaleX(1.0400);">45</span></div><div class="cell" style="left:1039.35px"><u style="background:#7f7f7f"></u><span class="t" style="left:38.43px;top:70.97px;font-size:20.00px;color:#222;font-weight:bold;transform:scaleX(1.0400);">50</span></div><div class="cell" style="left:1143.40px"><u style="background:#8c8c8c"></u><span class="t" style="left:38.43px;top:70.97px;font-size:20.00px;color:#222;font-weight:bold;transform:scaleX(1.0400);">55</span></div><div class="cell" style="left:1247.45px"><u style="background:#999999"></u><span class="t" style="left:38.43px;top:70.97px;font-size:20.00px;color:#222;font-weight:bold;transform:scaleX(1.0400);">60</span></div><div class="cell" style="left:1351.50px"><u style="background:#a6a6a6"></u><span class="t" style="left:38.43px;top:70.97px;font-size:20.00px;color:#222;font-weight:bold;transform:scaleX(1.0400);">65</span></div><div class="cell" style="left:1455.55px"><u style="background:#b2b2b2"></u><span class="t" style="left:38.43px;top:70.97px;font-size:20.00px;color:#222;font-weight:bold;transform:scaleX(1.0400);">70</span></div><div class="cell" style="left:1559.60px"><u style="background:#bfbfbf"></u><span class="t" style="left:38.43px;top:70.97px;font-size:20.00px;color:#222;font-weight:bold;transform:scaleX(1.0400);">75</span></div><div class="cell" style="left:1663.65px"><u style="background:#cccccc"></u><span class="t" style="left:38.43px;top:70.97px;font-size:20.00px;color:#222;font-weight:bold;transform:scaleX(1.0400);">80</span></div><div class="cell" style="left:1767.70px"><u style="background:#d9d9d9"></u><span class="t" style="left:38.43px;top:70.97px;font-size:20.00px;color:#222;font-weight:bold;transform:scaleX(1.0400);">85</span></div><div class="cell" style="left:1871.75px"><u style="background:#e5e5e5"></u><span class="t" style="left:38.43px;top:70.97px;font-size:20.00px;color:#222;font-weight:bold;transform:scaleX(1.0400);">90</span></div><div class="a" style="left:0;top:98.3px;width:1915px;height:24px;background:#5b5b5b"></div><div class="a" style="left:1px;top:100.5px;width:20px;height:20px;border-radius:4px;background:#8c8c8c"></div><svg class="a" style="left:1px;top:100.5px" width="20" height="20"><path d="M14 2.5 L14 17.5 L6.2 10 Z" fill="#454545"/></svg><div class="a" style="left:25.5px;top:100.2px;width:1630.5px;height:20.4px;border-radius:10px;background:#454545"></div><div class="a" style="left:1892.8px;top:100.5px;width:19.4px;height:20px;border-radius:4px;background:#747474"></div><svg class="a" style="left:1892.5px;top:100.5px" width="20" height="20"><path d="M6 2.5 L6 17.5 L13.8 10 Z" fill="#454545"/></svg></div><div class="a" style="left:0;top:1461px;width:1915px;height:1px;background:#3a3a3a"></div><div class="a" style="left:1916px;top:1338.8px;width:97px;height:36px;border-radius:9px 9px 0 0;background:linear-gradient(#9e9e9e,#8a8a8a 60%,#7e7e7e)"></div><div class="a" style="left:1916px;top:1376.6px;width:97px;height:84px;border-radius:0 0 7px 7px;background:linear-gradient(#8e8e8e,#7c7c7c 60%,#727272)"></div><div class="ic" style="left:1950.1px;top:1342.4px;width:28.8px;height:28.8px;background:linear-gradient(#6a6a6a,#808080 55%,#9c9c9c)"></div><svg class="a" style="left:1950px;top:1345px" width="30" height="20"><path d="M5.8 14.9 L22.8 14.9 L14.4 6.1 Z" fill="#333"/></svg><svg class="a" style="left:1933.1px;top:1387.4px" width="62.9" height="62.8" viewBox="0 0 62.9 62.8"><defs><clipPath id="pc"><rect x="4.8" y="4.3" width="53.7" height="55.4" rx="4.5"/></clipPath><clipPath id="pb"><rect x="18.8" y="4.3" width="24.9" height="55.4"/></clipPath></defs><rect x="0" y="0" width="62.9" height="62.8" rx="7.5" fill="#282828"/><rect x="0" y="30.4" width="62.9" height="4.6" fill="#101010"/><g clip-path="url(#pc)"><rect x="4.8" y="4.3" width="14" height="27.1" fill="#80ee48"/><rect x="18.8" y="4.3" width="24.9" height="27.1" fill="#3b38e8"/><rect x="43.7" y="4.3" width="14.8" height="27.1" fill="#7ef2fa"/><rect x="4.8" y="31.4" width="14" height="14.4" fill="#66d638"/><rect x="18.8" y="31.4" width="24.9" height="14.4" fill="#2214c6"/><rect x="43.7" y="31.4" width="14.8" height="14.4" fill="#72e4ec"/><rect x="4.8" y="45.8" width="14" height="13.9" fill="#4a9c22"/><rect x="18.8" y="45.8" width="24.9" height="13.9" fill="#1d12b2"/><rect x="43.7" y="45.8" width="14.8" height="13.9" fill="#3b9ca2"/><rect x="4.8" y="17.4" width="7" height="14" fill="#34402f"/><rect x="51.1" y="17.4" width="7.4" height="14" fill="#2f4042"/><rect x="4.8" y="31.4" width="14" height="14.4" fill="#52b42e"/><path d="M4.8 31.4 h7.6 l-2.4 14.4 h-5.2 Z" fill="#7ce846"/><rect x="43.7" y="31.4" width="14.8" height="14.4" fill="#4cb2b8"/><path d="M58.5 31.4 h-7.8 l2.4 14.4 h5.4 Z" fill="#7aeef6"/><g clip-path="url(#pb)"><circle cx="31.4" cy="31.4" r="5.2" fill="none" stroke="#6e74ff" stroke-width="1.3" opacity=".9"/><circle cx="31.4" cy="31.4" r="9.6" fill="none" stroke="#6e74ff" stroke-width="1.3" opacity=".9"/><circle cx="31.4" cy="31.4" r="14.4" fill="none" stroke="#6e74ff" stroke-width="1.3" opacity=".9"/><circle cx="31.4" cy="31.4" r="19.2" fill="none" stroke="#6e74ff" stroke-width="1.3" opacity=".9"/><circle cx="31.4" cy="31.4" r="24.0" fill="none" stroke="#6e74ff" stroke-width="1.3" opacity=".9"/><circle cx="31.4" cy="31.4" r="28.8" fill="none" stroke="#6e74ff" stroke-width="1.3" opacity=".9"/></g><circle cx="31.4" cy="29.5" r="8.4" fill="none" stroke="#b8589c" stroke-width="0.9" opacity=".9"/><path d="M31.4 4.3 V31.4" stroke="#b8589c" stroke-width="0.7" opacity=".7"/></g></svg><div class="tb" style="left:2014.5px;width:92.4px;border-radius:6px 0 0 6px"></div><div class="ic" style="left:2041.5px;top:1350px;width:38px;height:38px"></div><div class="tb" style="left:2108.5px;width:88.1px"></div><div class="ic" style="left:2133.3px;top:1350px;width:38px;height:38px"></div><div class="tb" style="left:2198.2px;width:88.8px"></div><div class="ic" style="left:2224.0px;top:1350px;width:38px;height:38px"></div><div class="tb" style="left:2288.6px;width:88.3px"></div><div class="ic" style="left:2313.5px;top:1350px;width:38px;height:38px"></div><div class="tb" style="left:2378.5px;width:88.6px"></div><div class="ic" style="left:2403.7px;top:1350px;width:38px;height:38px"></div><svg class="a" style="left:2040px;top:1349px" width="40" height="40"><rect x="13" y="12.6" width="14.6" height="14.6" fill="#303030"/></svg><svg class="a" style="left:2132px;top:1349px" width="40" height="40"><path d="M14.6 11.4 L30.4 20.3 L14.6 30.3 Z" fill="#303030"/></svg><svg class="a" style="left:2223px;top:1349px" width="40" height="40"><path d="M13.4 11.6 H9.8 V30.2 H13.4 M26.6 11.6 H30.2 V30.2 H26.6" fill="none" stroke="#303030" stroke-width="2.8"/><circle cx="16.3" cy="22" r="1.5" fill="#303030"/><circle cx="21.8" cy="22" r="1.5" fill="#303030"/><path d="M7.6 21 h2.4 M30 21 h2.4" stroke="#303030" stroke-width="2.2"/></svg><svg class="a" style="left:2312.5px;top:1349px" width="40" height="40"><path d="M20 20 C17 15.5 8.5 14.2 8.5 20 C8.5 25.8 17 24.5 20 20 C23 15.5 31.5 14.2 31.5 20 C31.5 25.8 23 24.5 20 20 Z" fill="none" stroke="#303030" stroke-width="3"/></svg><svg class="a" style="left:2402.7px;top:1349px" width="40" height="40"><path d="M10.8 18.5 A9.4 9.4 0 0 1 27.2 13.2" fill="none" stroke="#303030" stroke-width="4"/><path d="M29.2 21.5 A9.4 9.4 0 0 1 12.8 26.8" fill="none" stroke="#303030" stroke-width="4"/><path d="M30.6 9 L30.4 17.6 L22.4 15.6 Z" fill="#303030"/><path d="M9.4 31 L9.6 22.4 L17.6 24.4 Z" fill="#303030"/></svg><div class="a" style="left:2471.4px;top:1342px;width:87px;height:53.8px;background:linear-gradient(#6a6a6a,#4e4e4e);box-shadow:1px 1px 2px rgba(0,0,0,.5)"></div><span class="t" style="left:2485.97px;top:1353.82px;font-size:32.70px;color:#fff;transform:scaleX(1.0547);">123</span><div class="a" style="left:2015px;top:1401px;width:272px;height:61px;border-radius:6px 0 0 0;background:linear-gradient(#acacac,#8c8c8c 55%,#707070)"></div><div class="a" style="left:2288.6px;top:1401px;width:272px;height:61px;background:linear-gradient(#acacac,#8c8c8c 55%,#707070)"></div><div class="ic" style="left:2055.7px;top:1411.8px;width:40px;height:40px"></div><div class="ic" style="left:2484.3px;top:1411.8px;width:40px;height:40px"></div><svg class="a" style="left:2055.7px;top:1411.8px" width="40" height="40"><path d="M19 11.5 L11.5 20 L19 28.5 M27 11.5 L19.5 20 L27 28.5" fill="none" stroke="#3a3a3a" stroke-width="2.6"/></svg><svg class="a" style="left:2484.3px;top:1411.8px" width="40" height="40"><path d="M13 11.5 L20.5 20 L13 28.5 M21 11.5 L28.5 20 L21 28.5" fill="none" stroke="#3a3a3a" stroke-width="2.6"/></svg><span class="t" style="left:2126.85px;top:1411.10px;font-size:43.00px;color:#2e2e2e;transform:scaleX(1.0637);text-shadow:0 0 1.5px #303030,0 0 3px rgba(48,48,48,.6);">Back</span><span class="t" style="left:2340.05px;top:1411.10px;font-size:43.00px;color:#2e2e2e;transform:scaleX(1.2061);text-shadow:0 0 1.5px #303030,0 0 3px rgba(48,48,48,.6);">Next</span><div class="a" style="left:2554px;top:0;width:6px;height:1462px;background:linear-gradient(90deg,rgba(20,20,20,0),rgba(20,20,20,.6))"></div></body></html>
